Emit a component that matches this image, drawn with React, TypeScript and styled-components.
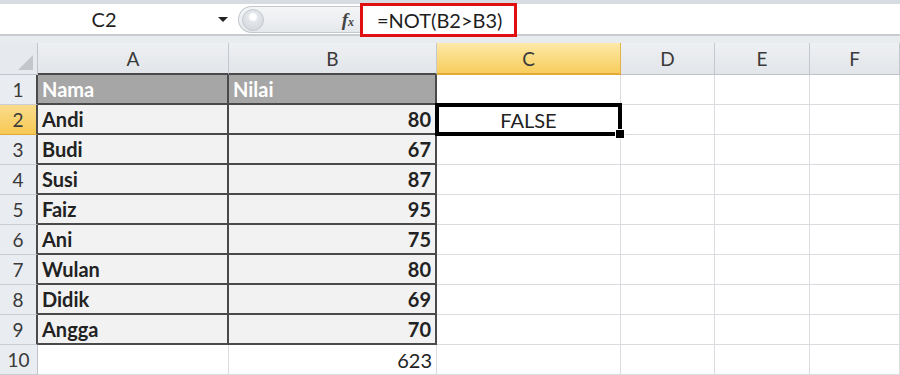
import React from "react";
import styled, { createGlobalStyle } from "styled-components";

const rows: Array<[string, string]> = [
  ["Andi", "80"],
  ["Budi", "67"],
  ["Susi", "87"],
  ["Faiz", "95"],
  ["Ani", "75"],
  ["Wulan", "80"],
  ["Didik", "69"],
  ["Angga", "70"],
];

const columns = ["A", "B", "C", "D", "E", "F"];

function App() {
  return (
    <>
      <GlobalStyle />
      <Wrap>
        <TopBand />
        <FormulaBar>
          <NameBox>
            <span>C2</span>
            <Caret />
          </NameBox>
          <Splitter>
            <Knob />
            <Fx>
              f<small>x</small>
            </Fx>
          </Splitter>
          <Formula>=NOT(B2&gt;B3)</Formula>
        </FormulaBar>
        <Gap />
        <Sheet>
          <Corner>
            <CornerMark />
          </Corner>
          {columns.map((c, i) => (
            <ColHead key={c} $active={c === "C"} $boxed={i < 2}>
              {c}
            </ColHead>
          ))}

          <RowHead $boxed>1</RowHead>
          <Cell $kind="head" $boxed>Nama</Cell>
          <Cell $kind="head" $boxed>Nilai</Cell>
          <Cell />
          <Cell />
          <Cell />
          <Cell />

          {rows.map(([name, score], i) => (
            <React.Fragment key={i}>
              <RowHead $boxed $active={i === 0}>
                {i + 2}
              </RowHead>
              <Cell $kind="data" $boxed>
                {name}
              </Cell>
              <Cell $kind="data" $boxed $align="right">
                {score}
              </Cell>
              {i === 0 ? (
                <Cell $align="center" $selected>
                  FALSE
                  <Selection>
                    <Handle />
                  </Selection>
                </Cell>
              ) : (
                <Cell />
              )}
              <Cell />
              <Cell />
              <Cell />
            </React.Fragment>
          ))}

          <RowHead>10</RowHead>
          <Cell />
          <Cell $align="right">623</Cell>
          <Cell />
          <Cell />
          <Cell />
          <Cell />
        </Sheet>
      </Wrap>
    </>
  );
}

export default App;

const GlobalStyle = createGlobalStyle`
  body {
    margin: 0;
    background: #ffffff;
    font-family: Lato, "Open Sans", sans-serif;
    overflow: hidden;
  }
`;

const Wrap = styled.div`
  width: 900px;
  height: 375px;
  overflow: hidden;
  background: #ffffff;
`;

const TopBand = styled.div`
  height: 4px;
  background: #d7dce2;
`;

const FormulaBar = styled.div`
  display: flex;
  align-items: stretch;
  height: 30px;
  background: #ffffff;
  border-bottom: 2px solid #c8ccd1;
`;

const NameBox = styled.div`
  width: 238px;
  display: flex;
  align-items: center;
  justify-content: center;
  position: relative;
  font-size: 20px;
  color: #1e1e1e;
  span {
    margin-right: 30px;
  }
`;

const Caret = styled.div`
  position: absolute;
  right: 10px;
  top: 13px;
  width: 0;
  height: 0;
  border-left: 5px solid transparent;
  border-right: 5px solid transparent;
  border-top: 5px solid #222;
`;

const Splitter = styled.div`
  width: 122px;
  display: flex;
  align-items: center;
  justify-content: space-between;
  background: linear-gradient(#f4f5f7, #e6e9ec);
  border: 1px solid #c3c7cc;
  border-right: none;
  border-radius: 15px 0 0 15px;
  margin: 2px 0 1px;
  padding: 0 6px 0 3px;
  box-sizing: border-box;
`;

const Knob = styled.div`
  width: 20px;
  height: 20px;
  border-radius: 50%;
  background: radial-gradient(circle at 50% 35%, #ffffff 0 3px, #e3e6ea 5px, #cfd3d8 100%);
  border: 1px solid #c6cacf;
`;

const Fx = styled.div`
  font-family: "Liberation Serif", serif;
  font-style: italic;
  font-weight: bold;
  font-size: 19px;
  color: #444;
  small {
    font-size: 12px;
  }
`;

const Formula = styled.div`
  width: 157px;
  box-sizing: border-box;
  margin: -1px 0 -3px;
  border: 3px solid #e01010;
  display: flex;
  align-items: center;
  padding-left: 14px;
  font-size: 20px;
  color: #1e1e1e;
  background: #ffffff;
`;

const Gap = styled.div`
  height: 7px;
  background: #e9ecef;
`;

const Sheet = styled.div`
  display: grid;
  grid-template-columns: 38px 191px 208px 184px 94px 95px 1fr;
  grid-template-rows: 32px repeat(10, 30px);
`;

const Corner = styled.div`
  background: #e6e9ed;
  border-right: 1px solid #bfc4ca;
  border-bottom: 1px solid #bfc4ca;
  position: relative;
`;

const CornerMark = styled.div`
  position: absolute;
  right: 4px;
  bottom: 4px;
  width: 0;
  height: 0;
  border-left: 15px solid transparent;
  border-bottom: 15px solid #c3c7cc;
`;

const ColHead = styled.div<{ $active?: boolean; $boxed?: boolean }>`
  display: flex;
  align-items: center;
  justify-content: center;
  font-size: 19px;
  color: #3a3a3a;
  background: ${(p) =>
    p.$active ? "linear-gradient(#fde9a8, #f8cd5c)" : "linear-gradient(#eef0f3, #e2e5e9)"};
  border-right: 1px solid ${(p) => (p.$active ? "#e2b24a" : "#c3c8ce")};
  border-bottom: ${(p) =>
    p.$boxed ? "2px solid #4a4a4a" : p.$active ? "2px solid #e2a93b" : "1px solid #bfc4ca"};
  box-sizing: border-box;
`;

const RowHead = styled.div<{ $active?: boolean; $boxed?: boolean }>`
  display: flex;
  align-items: center;
  justify-content: center;
  font-size: 19px;
  color: #3a3a3a;
  background: ${(p) => (p.$active ? "linear-gradient(#fbdc8c, #f6c954)" : "#e9ecf0")};
  border-right: ${(p) => (p.$boxed ? "2px solid #4a4a4a" : "1px solid #bfc4ca")};
  border-bottom: 1px solid ${(p) => (p.$active ? "#e2a93b" : "#c9cdd2")};
  box-sizing: border-box;
`;

const Cell = styled.div<{
  $kind?: "head" | "data";
  $boxed?: boolean;
  $selected?: boolean;
  $align?: "left" | "right" | "center";
}>`
  position: relative;
  z-index: ${(p) => (p.$selected ? 2 : "auto")};
  display: flex;
  align-items: center;
  justify-content: ${(p) =>
    p.$align === "right" ? "flex-end" : p.$align === "center" ? "center" : "flex-start"};
  padding: 0 4px;
  box-sizing: border-box;
  font-size: 20px;
  font-weight: ${(p) => (p.$kind ? 700 : 400)};
  color: ${(p) => (p.$kind === "head" ? "#ffffff" : "#222222")};
  background: ${(p) =>
    p.$kind === "head" ? "#a6a6a6" : p.$kind === "data" ? "#f2f2f2" : "#ffffff"};
  border-right: ${(p) => (p.$boxed ? "2px solid #4a4a4a" : "1px solid #dadcdf")};
  border-bottom: ${(p) => (p.$boxed ? "2px solid #4a4a4a" : "1px solid #dadcdf")};
  white-space: nowrap;
`;

const Selection = styled.div`
  position: absolute;
  top: -2px;
  left: -2px;
  right: -2px;
  bottom: -2px;
  border: 4px solid #000000;
  pointer-events: none;
`;

const Handle = styled.div`
  position: absolute;
  right: -7px;
  bottom: -7px;
  width: 8px;
  height: 8px;
  background: #000000;
  border: 1px solid #ffffff;
`;
